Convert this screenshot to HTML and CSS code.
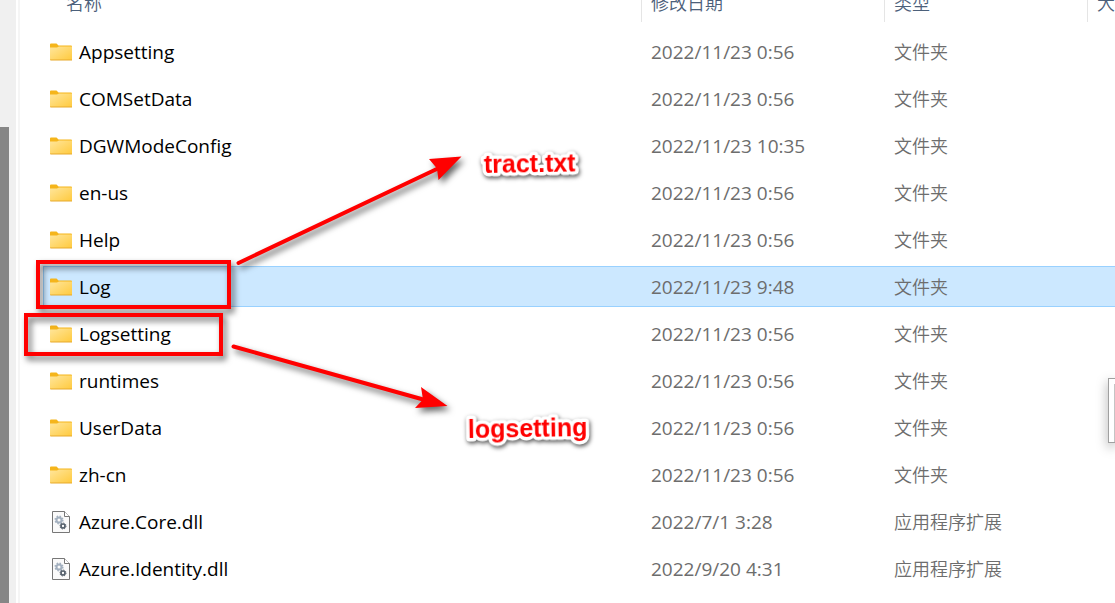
FILE: index.html
```html
<!DOCTYPE html>
<html lang="zh-CN">
<head>
<meta charset="utf-8">
<title>文件夹</title>
<link rel="stylesheet" href="styles.css">
</head>
<body>
<svg class="defs" width="0" height="0" aria-hidden="true">
  <defs>
    <linearGradient id="fold" x1="0" y1="0" x2="1" y2="1">
      <stop offset="0" stop-color="#ffe69c"/><stop offset="1" stop-color="#ffca3e"/>
    </linearGradient>
    <symbol id="folder" viewBox="0 0 22 18">
      <path d="M0 1.500Q0 .5 1 .5H6.500L8.500 2.500H21Q22 2.500 22 3.500V8H0Z" fill="#f5b51b"/>
      <path d="M0 4.500H7L9 3.500H22V17H0Z" fill="url(#fold)"/>
      <path d="M0 16.500H22V17.500H.5Z" fill="#e8a92c"/>
    </symbol>
    <symbol id="dll" viewBox="0 0 18 22">
      <path d="M.5 .5H12.500L17.500 5.500V21.500H.5Z" fill="#fafafa" stroke="#777"/>
      <path d="M12.500 .5V5.500H17.500" fill="#fff" stroke="#777"/>
      <circle cx="7" cy="9" r="2.500" fill="none" stroke="#a3b0bf" stroke-width="2"/>
      <circle cx="7" cy="9" r="3.800" fill="none" stroke="#a3b0bf" stroke-width="1.500" stroke-dasharray="1.500 1.500"/>
      <circle cx="11" cy="15" r="2" fill="#fff" stroke="#56616d" stroke-width="1.700"/>
      <circle cx="11" cy="15" r="3" fill="none" stroke="#56616d" stroke-width="1" stroke-dasharray="1.200 1.150"/>
    </symbol>
  </defs>
</svg>
<div class="window">
  <aside class="nav"><div class="thumb"></div></aside>
  <main class="files">
    <table class="list">
      <colgroup><col><col class="col-date"><col class="col-type"><col class="col-size"></colgroup>
      <thead>
        <tr>
          <th><div class="head head-name">名称</div></th>
          <th><div class="head">修改日期</div></th>
          <th><div class="head">类型</div></th>
          <th><div class="head">大小</div></th>
        </tr>
      </thead>
      <tbody>
        <tr><td><div class="name"><svg class="folder"><use href="#folder"/></svg>Appsetting</div></td><td>2022/11/23 0:56</td><td class="type">文件夹</td><td></td></tr>
        <tr><td><div class="name"><svg class="folder"><use href="#folder"/></svg>COMSetData</div></td><td>2022/11/23 0:56</td><td class="type">文件夹</td><td></td></tr>
        <tr><td><div class="name"><svg class="folder"><use href="#folder"/></svg>DGWModeConfig</div></td><td>2022/11/23 10:35</td><td class="type">文件夹</td><td></td></tr>
        <tr><td><div class="name"><svg class="folder"><use href="#folder"/></svg>en-us</div></td><td>2022/11/23 0:56</td><td class="type">文件夹</td><td></td></tr>
        <tr><td><div class="name"><svg class="folder"><use href="#folder"/></svg>Help</div></td><td>2022/11/23 0:56</td><td class="type">文件夹</td><td></td></tr>
        <tr class="selected"><td><div class="name"><svg class="folder"><use href="#folder"/></svg>Log</div></td><td>2022/11/23 9:48</td><td class="type">文件夹</td><td></td></tr>
        <tr><td><div class="name"><svg class="folder"><use href="#folder"/></svg>Logsetting</div></td><td>2022/11/23 0:56</td><td class="type">文件夹</td><td></td></tr>
        <tr><td><div class="name"><svg class="folder"><use href="#folder"/></svg>runtimes</div></td><td>2022/11/23 0:56</td><td class="type">文件夹</td><td></td></tr>
        <tr><td><div class="name"><svg class="folder"><use href="#folder"/></svg>UserData</div></td><td>2022/11/23 0:56</td><td class="type">文件夹</td><td></td></tr>
        <tr><td><div class="name"><svg class="folder"><use href="#folder"/></svg>zh-cn</div></td><td>2022/11/23 0:56</td><td class="type">文件夹</td><td></td></tr>
        <tr><td><div class="name"><svg class="dll"><use href="#dll"/></svg>Azure.Core.dll</div></td><td>2022/7/1 3:28</td><td class="type">应用程序扩展</td><td></td></tr>
        <tr><td><div class="name"><svg class="dll"><use href="#dll"/></svg>Azure.Identity.dll</div></td><td>2022/9/20 4:31</td><td class="type">应用程序扩展</td><td></td></tr>
      </tbody>
    </table>
  </main>
  <div class="popup"><div class="popup-inner"></div></div>
  <svg class="notes">
    <g class="ink">
      <rect x="38" y="262" width="191" height="45"/>
      <rect x="26" y="315" width="195" height="39"/>
      <path d="M238.500 263L440 167.500M233.500 346.500L425 400"/>
      <path class="tip" d="M461.500 156.500L429 159L437 168.500L438.500 180ZM447.500 406L421 387L423 399.500L415 408Z"/>
    </g>
    <g class="label">
      <text x="484" y="173" transform="rotate(-1 484 173)">tract.txt</text>
      <text x="468" y="438" transform="rotate(-1 468 438)">logsetting</text>
    </g>
  </svg>
</div>
</body>
</html>
```
FILE: styles.css
```css
body {
  margin: 0;
  background: #fff;
  font-family: "Open Sans", "Noto Sans CJK SC", sans-serif;
  font-size: 18px;
  color: #000;
}
.defs { position: absolute; }
.window {
  position: relative;
  display: flex;
  height: 100vh;
  overflow: hidden;
}
.nav {
  flex: none;
  width: 16px;
  margin-right: 2px;
  background: #f0f0f0;
}
.thumb {
  width: 9px;
  height: 100%;
  margin-top: 127px;
  background: #868686;
}
.files {
  flex: 1;
  min-width: 0;
  border-left: 2px solid #f5f5f5;
  padding-left: 23px;
}
.list {
  width: 100%;
  margin-top: -17px;
  table-layout: fixed;
  border-collapse: separate;
  border-spacing: 0 6px;
}
.col-date { width: 243px; }
.col-type { width: 203px; }
.col-size { width: 28px; }
th {
  height: 36px;
  padding: 0;
  vertical-align: top;
  text-align: left;
  font-weight: 350;
  color: #4c607a;
}
.head {
  height: 33px;
  padding-left: 9px;
  border-left: 1px solid #e5e5e5;
  line-height: 27px;
  font-family: "Noto Sans CJK SC", sans-serif;
  white-space: nowrap;
  overflow: hidden;
}
.head-name {
  padding-left: 23px;
  border-left: 0;
}
td {
  box-sizing: border-box;
  height: 41px;
  padding: 0 0 0 10px;
  border: solid transparent;
  border-width: 1px 0;
  line-height: 24px;
  font-size: 19px;
  color: #6d6d6d;
  white-space: nowrap;
}
td:first-child {
  padding-left: 6px;
  border-left-width: 1px;
}
.type {
  padding-bottom: 2px;
  font-family: "Noto Sans CJK SC", sans-serif;
  font-size: 18px;
  font-weight: 350;
}
.name {
  display: flex;
  align-items: center;
  gap: 7px;
  font-size: 19px;
  color: #000;
}
.folder { width: 22px; height: 18px; }
.dll { width: 18px; height: 22px; margin: 0 2px; }
.selected td {
  background: #cce8ff;
  border-color: #99d1ff;
}
.popup {
  position: absolute;
  right: 0;
  top: 378px;
  box-sizing: border-box;
  width: 7px;
  height: 65px;
  padding: 5px 0 0 5px;
  border: 1px solid #a0a0a0;
  border-right: 0;
  background: #fff;
  box-shadow: 0 4px 12px rgba(0, 0, 0, .35);
}
.popup-inner {
  height: 58px;
  background: #c4c4c4;
}
.notes {
  position: absolute;
  left: 0;
  top: 0;
  width: 100%;
  height: 100%;
  pointer-events: none;
}
.ink {
  fill: none;
  stroke: #f00;
  stroke-width: 4;
  stroke-linecap: round;
  filter: drop-shadow(3px 4px 3px rgba(0, 0, 0, .6));
}
.tip { fill: #f00; stroke: none; }
.label {
  font: bold 25px "Liberation Sans", sans-serif;
  fill: #f00;
  stroke: #fff;
  stroke-width: 7;
  stroke-linejoin: round;
  paint-order: stroke;
  filter: drop-shadow(1px 2px 2px rgba(0, 0, 0, .65));
}
```
